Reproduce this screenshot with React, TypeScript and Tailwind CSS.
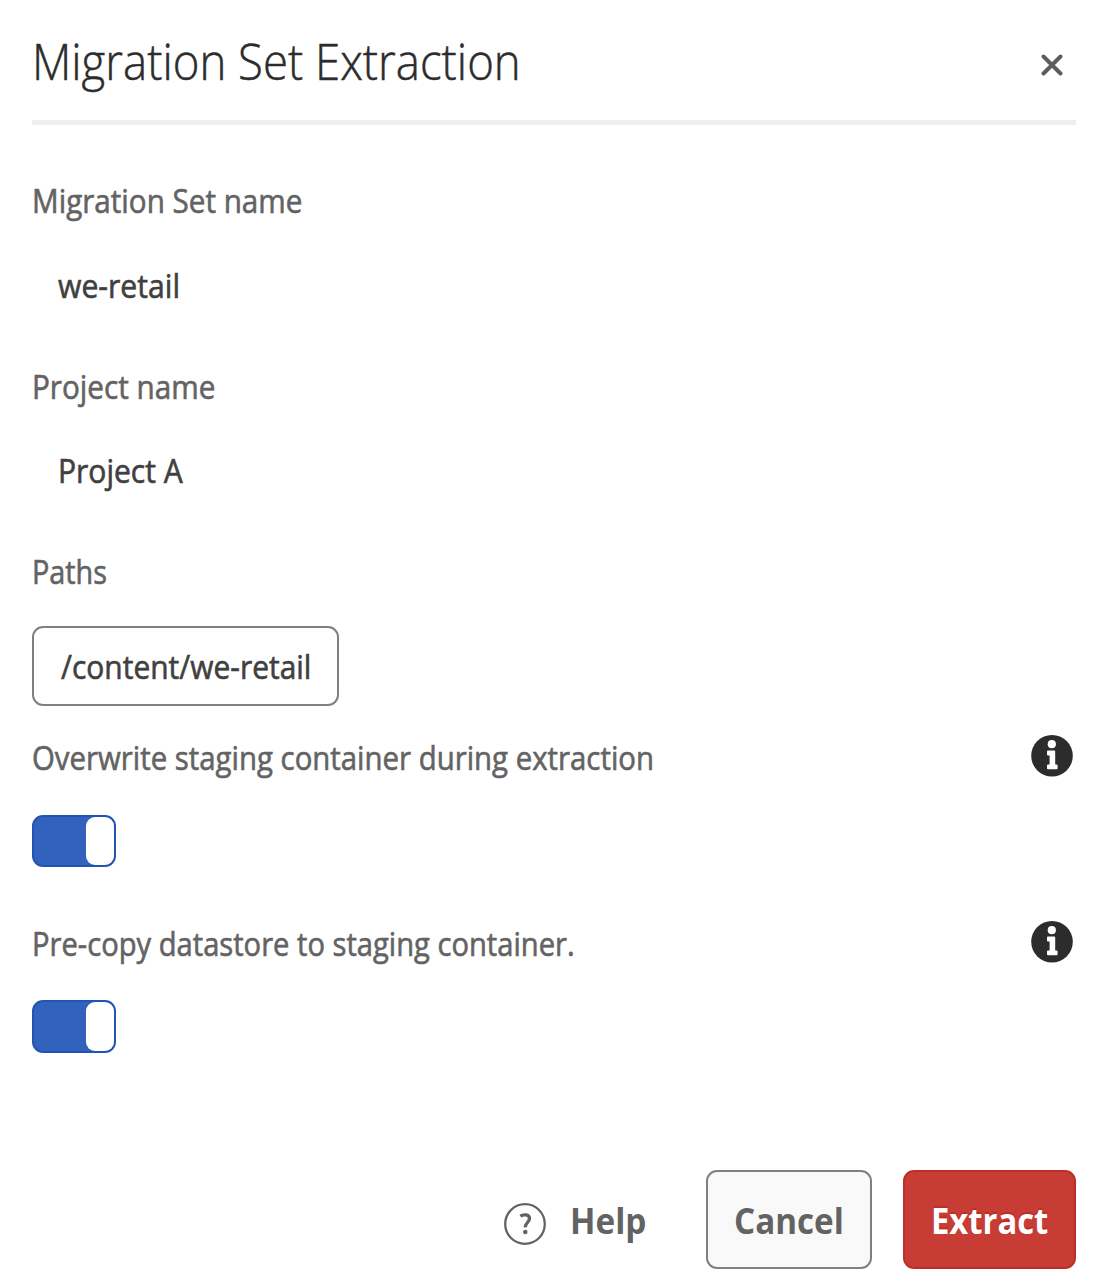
import { useState } from "react";

function InfoIcon() {
  return (
    <svg className="mt-px h-[42px] w-[42px]" viewBox="0 0 42 42" role="img" aria-label="Information">
      <circle cx="21" cy="20.8" r="20.8" fill="#2c2c2c" />
      <circle cx="20.8" cy="9.2" r="4.1" fill="#fff" />
      <path
        d="M17 15.4h6.2a1 1 0 0 1 1 1v13.2h1.4a1 1 0 0 1 1 1v2.6a1 1 0 0 1-1 1h-8.6a1 1 0 0 1-1-1v-2.6a1 1 0 0 1 1-1h1.6v-9H17a1 1 0 0 1-1-1v-3.2a1 1 0 0 1 1-1z"
        fill="#fff"
      />
    </svg>
  );
}

function Label({ text, fit }: { text: string; fit: string }) {
  return (
    <span
      className={`block w-max origin-left whitespace-nowrap text-[32px] leading-10 text-[#636363] [-webkit-text-stroke:0.6px_#636363] ${fit}`}
    >
      {text}
    </span>
  );
}

function Value({ text, fit }: { text: string; fit: string }) {
  return (
    <span
      className={`block w-max origin-left whitespace-nowrap text-[32px] leading-10 text-[#404040] [-webkit-text-stroke:0.6px_#404040] ${fit}`}
    >
      {text}
    </span>
  );
}

function Toggle({ label, className }: { label: string; className: string }) {
  const [on, setOn] = useState(true);
  return (
    <button
      role="switch"
      aria-checked={on}
      aria-label={label}
      onClick={() => setOn(!on)}
      className={`flex w-[84px] rounded-[11px] border-2 border-[#2254b1] bg-[#3262bb] ${on ? "justify-end" : "justify-start"} ${className}`}
    >
      <span className="h-full w-7 rounded-[9px] bg-white" />
    </button>
  );
}

export default function App() {
  return (
    <div className="flex h-[1286px] w-[1096px] flex-col overflow-hidden bg-white pr-5 pl-8 font-['Open_Sans',sans-serif]">
      <header className="flex h-[125px] items-start justify-between border-b-[5px] border-[#efefef] pt-[31px]">
        <h1 className="w-max origin-left scale-x-[0.911] whitespace-nowrap text-[50px] leading-[60px] font-light text-[#2c2c2c] [-webkit-text-stroke:0.5px_#2c2c2c]">
          Migration Set Extraction
        </h1>
        <button aria-label="Close" className="mt-[23px] mr-[13px]">
          <svg className="h-[22px] w-[22px]" viewBox="0 0 22 22">
            <path d="M2.5 2.5l17 17M19.5 2.5l-17 17" stroke="#5d5d5d" strokeWidth="3.9" strokeLinecap="round" />
          </svg>
        </button>
      </header>

      <main className="flex flex-col">
        <section className="mt-14">
          <Label text="Migration Set name" fit="scale-x-[0.926]" />
          <div className="mt-[45px] pl-[26px]">
            <Value text="we-retail" fit="scale-x-[0.943]" />
          </div>
        </section>
        <section className="mt-[61px]">
          <Label text="Project name" fit="scale-x-[0.928]" />
          <div className="mt-11 pl-[26px]">
            <Value text="Project A" fit="scale-x-[0.938]" />
          </div>
        </section>
        <section className="mt-[61px]">
          <Label text="Paths" fit="scale-x-[0.9]" />
          <div className="mt-[34px] flex h-20 w-[307px] items-center rounded-[11px] border-2 border-[#808080] pt-[2px] pl-[27px]">
            <Value text="/content/we-retail" fit="scale-x-[0.936]" />
          </div>
        </section>
        <section className="mt-7">
          <div className="flex h-[44px] items-start justify-between pr-[3px]">
            <div className="pt-1">
              <Label text="Overwrite staging container during extraction" fit="scale-x-[0.918]" />
            </div>
            <InfoIcon />
          </div>
          <Toggle label="Overwrite staging container during extraction" className="mt-[37px] h-[52px]" />
        </section>
        <section className="mt-[53px]">
          <div className="flex h-[44px] items-start justify-between pr-[3px]">
            <div className="pt-1">
              <Label text="Pre-copy datastore to staging container." fit="scale-x-[0.911]" />
            </div>
            <InfoIcon />
          </div>
          <Toggle label="Pre-copy datastore to staging container" className="mt-9 h-[53px]" />
        </section>
      </main>

      <footer className="mt-[117px] flex h-[99px] items-center justify-end">
        <button className="mr-[58px] flex w-[144px] items-center gap-6">
          <svg className="mt-2 h-[42px] w-[42px] shrink-0" viewBox="0 0 42 42">
            <circle cx="21" cy="21" r="19.8" fill="none" stroke="#636363" strokeWidth="2.3" />
            <path
              d="M16.3 13.2c3.8-2.5 9.2-1.5 9.2 2.2 0 3.8-4.4 4.6-4.2 9"
              fill="none"
              stroke="#636363"
              strokeWidth="3.3"
            />
            <circle cx="21.3" cy="29" r="2.3" fill="#636363" />
          </svg>
          <span className="w-max origin-left scale-x-[0.925] pt-[2px] text-[36px] leading-[48px] font-bold text-[#636363]">
            Help
          </span>
        </button>
        <button className="mr-[31px] flex h-[99px] w-[166px] items-center rounded-[11px] border-2 border-[#808080] bg-[#f9f9f9] pl-[26px]">
          <span className="w-max origin-left scale-x-[0.922] pt-[2px] text-[36px] leading-[48px] font-bold text-[#636363]">
            Cancel
          </span>
        </button>
        <button className="flex h-[99px] w-[173px] items-center rounded-[11px] border-2 border-[#bb2f28] bg-[#c73c34] pl-[26px]">
          <span className="w-max origin-left scale-x-[0.91] pt-[2px] text-[36px] leading-[48px] font-bold text-white [text-shadow:0_-2px_0_#bb2f28]">
            Extract
          </span>
        </button>
      </footer>
    </div>
  );
}
